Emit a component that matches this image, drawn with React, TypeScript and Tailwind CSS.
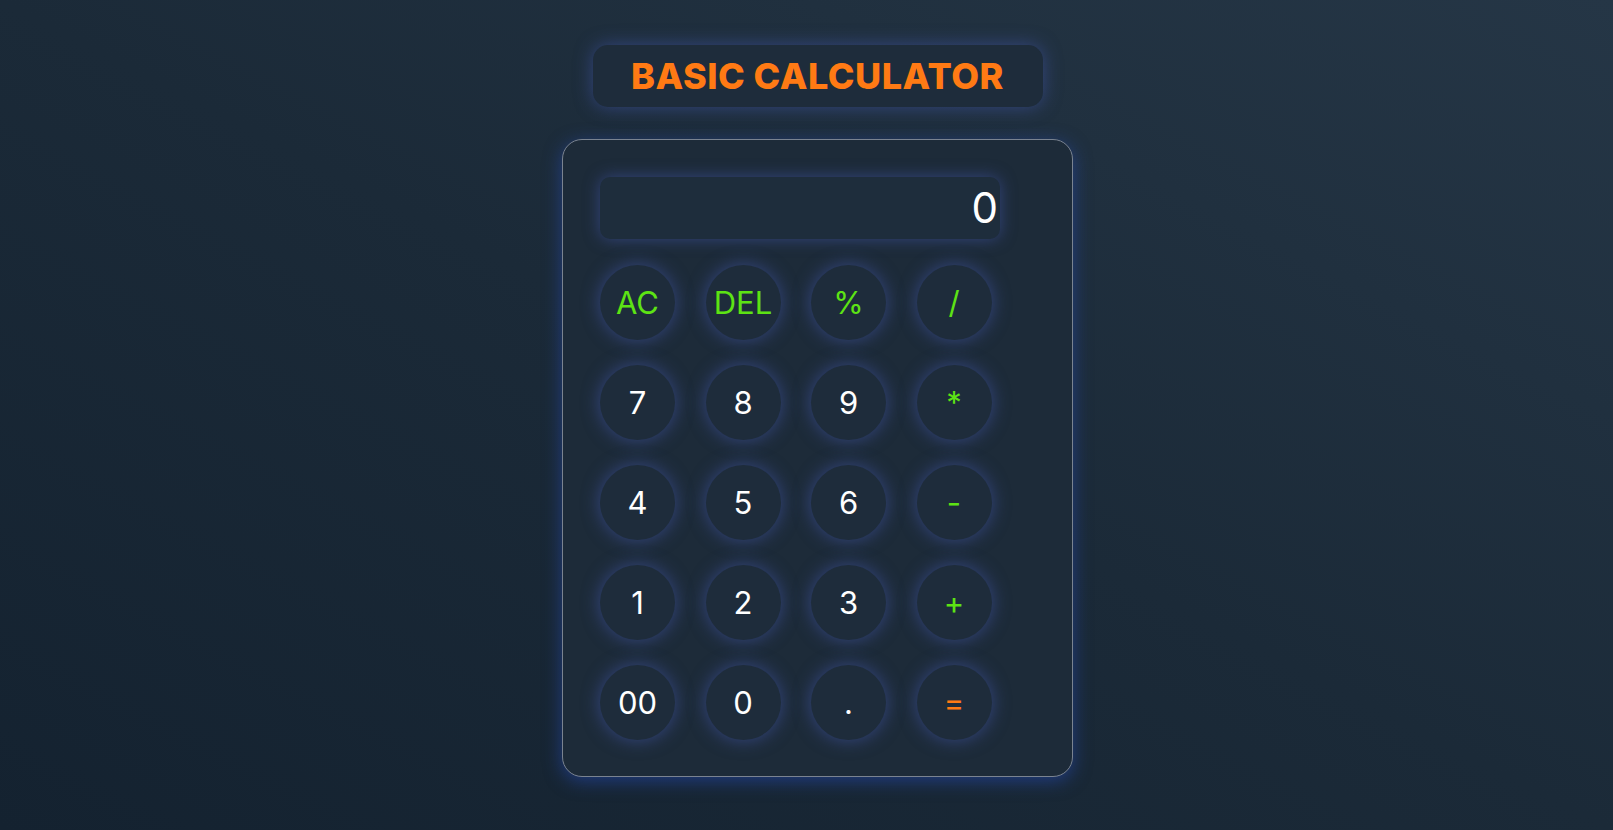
import React from "react";

const keys: { label: string; color: "g" | "w" | "o" }[] = [
  { label: "AC", color: "g" },
  { label: "DEL", color: "g" },
  { label: "%", color: "g" },
  { label: "/", color: "g" },
  { label: "7", color: "w" },
  { label: "8", color: "w" },
  { label: "9", color: "w" },
  { label: "*", color: "g" },
  { label: "4", color: "w" },
  { label: "5", color: "w" },
  { label: "6", color: "w" },
  { label: "-", color: "g" },
  { label: "1", color: "w" },
  { label: "2", color: "w" },
  { label: "3", color: "w" },
  { label: "+", color: "g" },
  { label: "00", color: "w" },
  { label: "0", color: "w" },
  { label: ".", color: "w" },
  { label: "=", color: "o" },
];

export default function App() {
  return (
    <div
      className="w-full h-[830px] bg-[linear-gradient(to_top_right,#142230,#1b2a38_50%,#253646)] flex flex-col items-center pl-[22px] pt-[45px]"
      style={{ fontFamily: "Inter, 'Noto Sans', sans-serif" }}
    >
      <div className="w-[450px] h-[62px] rounded-[15px] bg-[#1e2c3b] shadow-[0_0_18px_rgba(70,90,180,0.55)] flex items-center justify-center">
        <h1 className="text-[#ff7a14] text-[36px] font-extrabold tracking-[0.5px] leading-none">
          BASIC CALCULATOR
        </h1>
      </div>

      <div className="mt-[32px] w-[511px] h-[638px] rounded-[20px] border border-[#7a8390] bg-[#1d2b39] shadow-[0_4px_18px_rgba(40,80,200,0.5)] p-[37px] pr-[72px]">
        <div className="w-[400px] h-[62px] rounded-[10px] bg-[#1e2d3c] shadow-[0_0_16px_rgba(70,90,180,0.55)] flex items-center justify-end pr-[2px]">
          <span className="text-white text-[42px] leading-none">0</span>
        </div>
        <div className="mt-[26px] grid grid-cols-[75px_75px_75px_75px] gap-x-[30.5px] gap-y-[25px]">
          {keys.map((k) => (
            <button
              key={k.label}
              className={
                "w-[75px] h-[75px] rounded-full bg-[#1e2c3b] shadow-[0_0_18px_rgba(70,90,180,0.6)] flex items-center justify-center text-[31px] leading-none " +
                (k.color === "g"
                  ? "text-[#5de314]"
                  : k.color === "o"
                  ? "text-[#ff7a14]"
                  : "text-white")
              }
            >
              {k.label}
            </button>
          ))}
        </div>
      </div>
    </div>
  );
}
